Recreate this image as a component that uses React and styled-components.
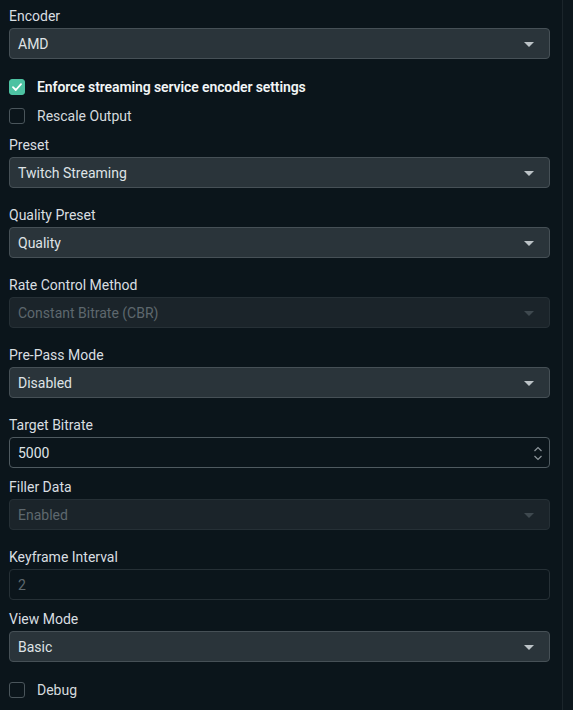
import React from 'react';
import styled, { createGlobalStyle } from 'styled-components';

const GlobalStyle = createGlobalStyle`
    html, body {
        margin: 0;
        padding: 0;
        background-color: #0b151b;
    }
    #root {
        min-height: 100vh;
    }
`;

const Page = styled.div`
    display: flex;
    min-height: 100vh;
    font-family: Roboto, "Liberation Sans", sans-serif;
    font-size: 14px;
    color: #dde2e5;
`;

const Content = styled.div`
    width: 541px;
    padding: 7px 0 0 9px;
    display: flex;
    flex-direction: column;
`;

const Gutter = styled.div`
    margin-left: auto;
    width: 10px;
    border-left: 1px solid #1b252b;
    background-color: #0d171d;
`;

const Group = styled.div`
    display: flex;
    flex-direction: column;
    margin-bottom: ${p => p.$after || 0}px;
`;

const Label = styled.div`
    line-height: 19px;
    height: 17px;
    margin-bottom: 4px;
    color: #d9dee1;
`;

const Control = styled.div`
    position: relative;
    box-sizing: border-box;
    height: 31px;
    border-radius: 4px;
    display: flex;
    align-items: center;
    padding: 0 8px;
    border: 1px solid ${p => p.$variant === 'disabled' ? '#263036' : p.$variant === 'input' ? '#4f5a60' : p.$variant === 'inputOff' ? '#263036' : '#465056'};
    background-color: ${p => p.$variant === 'disabled' ? '#1b242a' : p.$variant === 'input' || p.$variant === 'inputOff' ? '#0b151b' : '#2a343a'};
    color: ${p => p.$variant === 'disabled' || p.$variant === 'inputOff' ? '#5e686e' : '#dfe3e6'};
`;

const Caret = styled.span`
    position: absolute;
    right: 15px;
    top: 13px;
    width: 0;
    height: 0;
    border-left: 5px solid transparent;
    border-right: 5px solid transparent;
    border-top: 5px solid ${p => p.$dim ? '#3f494f' : '#bcc3c7'};
`;

const Spin = styled.svg`
    position: absolute;
    right: 6px;
    top: 8px;
`;

const CheckRow = styled.label`
    display: flex;
    align-items: center;
    height: 29px;
    margin-top: ${p => p.$top || 0}px;
    margin-bottom: ${p => p.$after || 0}px;
`;

const Box = styled.span`
    box-sizing: border-box;
    width: 16px;
    height: 16px;
    border-radius: 3px;
    margin-right: 12px;
    display: flex;
    align-items: center;
    justify-content: center;
    background-color: ${p => p.$checked ? '#4dc2a2' : 'transparent'};
    border: 1px solid ${p => p.$checked ? '#4dc2a2' : '#4a555b'};
`;

const CheckText = styled.span`
    font-weight: ${p => p.$strong ? 600 : 400};
    letter-spacing: ${p => p.$strong ? '-0.1px' : '0'};
    color: ${p => p.$strong ? '#f2f5f6' : '#d5dade'};
`;

function Select({ label, value, disabled, after }) {
    return (
        <Group $after={after}>
            <Label>{label}</Label>
            <Control $variant={disabled ? 'disabled' : 'select'}>
                {value}
                <Caret $dim={disabled} />
            </Control>
        </Group>
    );
}

function Check({ text, checked, strong, top, after }) {
    return (
        <CheckRow $top={top} $after={after}>
            <Box $checked={checked}>
                {checked && (
                    <svg width="10" height="8" viewBox="0 0 10 8">
                        <path d="M1 4.2 L3.8 7 L9 1.2" fill="none" stroke="#ffffff" strokeWidth="1.8" strokeLinecap="round" strokeLinejoin="round" />
                    </svg>
                )}
            </Box>
            <CheckText $strong={strong}>{text}</CheckText>
        </CheckRow>
    );
}

function App() {
    return (
        <>
            <GlobalStyle />
            <Page>
                <Content>
                    <Select label="Encoder" value="AMD" />
                    <Check text="Enforce streaming service encoder settings" checked strong top={13} />
                    <Check text="Rescale Output" after={6} />
                    <Select label="Preset" value="Twitch Streaming" after={18} />
                    <Select label="Quality Preset" value="Quality" after={18} />
                    <Select label="Rate Control Method" value="Constant Bitrate (CBR)" disabled after={18} />
                    <Select label="Pre-Pass Mode" value="Disabled" after={18} />
                    <Group $after={10}>
                        <Label>Target Bitrate</Label>
                        <Control $variant="input">
                            5000
                            <Spin width="10" height="15" viewBox="0 0 10 15">
                                <path d="M1.5 5 L5 1.5 L8.5 5" fill="none" stroke="#8d969b" strokeWidth="1.2" />
                                <path d="M1.5 10 L5 13.5 L8.5 10" fill="none" stroke="#8d969b" strokeWidth="1.2" />
                            </Spin>
                        </Control>
                    </Group>
                    <Select label="Filler Data" value="Enabled" disabled after={18} />
                    <Group $after={10}>
                        <Label>Keyframe Interval</Label>
                        <Control $variant="inputOff">2</Control>
                    </Group>
                    <Select label="View Mode" value="Basic" />
                    <Check text="Debug" top={13} />
                </Content>
                <Gutter />
            </Page>
        </>
    );
}

export default App;
